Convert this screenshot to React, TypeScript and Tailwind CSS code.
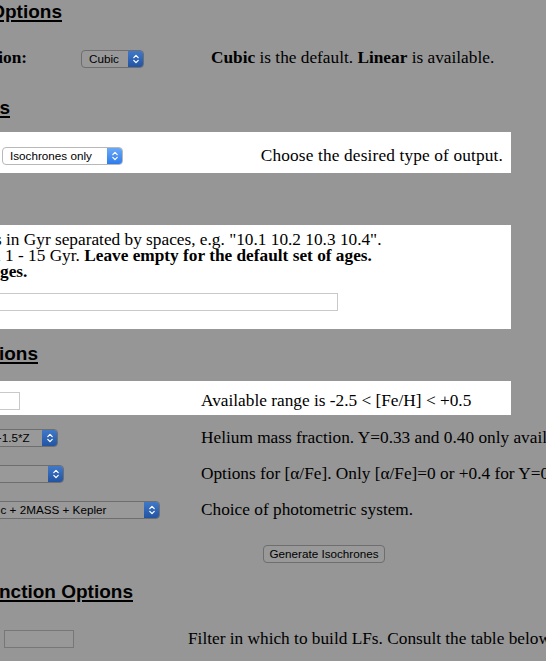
import React from "react";

// the crop cuts the page on its left; Cut keeps a fixed right edge and lets the rest spill out left
function Cut({ className, children }: { className: string; children: React.ReactNode }) {
  return (
    <div className={`flex shrink-0 justify-end whitespace-nowrap ${className}`}>{children}</div>
  );
}

function Heading({ edge, children }: { edge: string; children: React.ReactNode }) {
  return (
    <Cut className={edge}>
      <h2 className="font-['Liberation_Sans',Arial,sans-serif] text-[19px] font-bold leading-[22px] text-black underline decoration-[1.5px] underline-offset-[2px]">
        {children}
      </h2>
    </Cut>
  );
}

function Arrows() {
  return (
    <svg width="8" height="12" viewBox="0 0 8 12" fill="none" stroke="white" strokeWidth="1.3" strokeLinecap="round" strokeLinejoin="round">
      <path d="M1.8 4.6 L4 2.4 L6.2 4.6" />
      <path d="M1.8 7.4 L4 9.6 L6.2 7.4" />
    </svg>
  );
}

function Select({ label, className, dim }: { label: string; className: string; dim?: boolean }) {
  return (
    <div
      className={`flex h-[18px] shrink-0 items-stretch overflow-hidden rounded-[4px] border ${
        dim ? "border-[#6e6e6e] bg-[#999999]" : "border-[#b8b8b8] bg-white"
      } ${className}`}
    >
      <span className="flex-1 whitespace-nowrap pl-[7px] font-['Liberation_Sans',Arial,sans-serif] text-[11.7px] leading-[16px] text-black">
        {label}
      </span>
      <span
        className={`flex w-[15px] items-center justify-center ${
          dim ? "bg-linear-to-b from-[#4079c8] to-[#2254a3]" : "bg-linear-to-b from-[#6aa9f7] to-[#2e7bec]"
        }`}
      >
        <Arrows />
      </span>
    </div>
  );
}

function Input({ className, dim }: { className: string; dim?: boolean }) {
  return (
    <div
      className={`h-[18px] shrink-0 border ${
        dim ? "border-[#777777] bg-[#989898]" : "border-[#c9c9c9] bg-white"
      } ${className}`}
    />
  );
}

export default function App() {
  return (
    <div className="h-[661px] w-[546px] overflow-hidden bg-[#969696] font-['Liberation_Serif','Times_New_Roman',serif] text-[17.3px] text-black">
      {/* Interpolation */}
      <div className="pt-px">
        <Heading edge="w-[62px]">Interpolation Options</Heading>
      </div>

      <div className="mt-[22px] flex h-[28px] items-center whitespace-nowrap">
        <Cut className="w-[27px] mb-[3px]">
          <span className="font-bold">Interpolation:</span>
        </Cut>
        <Select label="Cubic" className="ml-[54px] w-[63px]" dim />
        <span className="ml-[67px] mb-[3px]">
          <b>Cubic</b> is the default. <b>Linear</b> is available.
        </span>
      </div>

      {/* Output */}
      <div className="mt-[24px]">
        <Heading edge="w-[10px]">Output Types</Heading>
      </div>

      <div className="mt-[13px] flex h-[41px] w-[511px] items-center bg-white pt-[6px] whitespace-nowrap">
        <Select label="Isochrones only" className="ml-[2px] w-[121px]" />
        <span className="ml-auto pr-[8px] tracking-[0.15px]">Choose the desired type of output.</span>
      </div>

      <div className="mt-[52px] w-[511px] bg-white pt-[7px] pb-[18px] leading-[16px] whitespace-nowrap">
        <div className="flex">
          <Cut className="w-[6px]">Enter ages&nbsp;</Cut>
          <span>in Gyr separated by spaces, e.g. "10.1 10.2 10.3 10.4".</span>
        </div>
        <div className="flex">
          <Cut className="w-[5px]">Ages must be within&nbsp;</Cut>
          <span>
            1 - 15 Gyr. <b>Leave empty for the default set of ages.</b>
          </span>
        </div>
        <div className="flex">
          <Cut className="w-[0px]">
            <b>Maximum of 20 a</b>
          </Cut>
          <b>ges.</b>
        </div>
        <div className="mt-[13px] flex">
          <Cut className="w-[338px]">
            <Input className="w-[420px]" />
          </Cut>
        </div>
      </div>

      {/* Composition */}
      <div className="mt-[14px]">
        <Heading edge="w-[38px]">Composition Options</Heading>
      </div>

      <div className="mt-[16px] flex h-[34px] w-[511px] items-center bg-white pt-[5px] whitespace-nowrap">
        <Cut className="w-[20px]">
          <Input className="w-[60px]" />
        </Cut>
        <span className="ml-[181px]">Available range is -2.5 &lt; [Fe/H] &lt; +0.5</span>
      </div>

      <div className="mt-[5px] flex h-[36px] items-center whitespace-nowrap">
        <Cut className="w-[58px]">
          <Select label="Y=0.245+1.5*Z" className="w-[115px]" dim />
        </Cut>
        <span className="ml-[143px]">Helium mass fraction. Y=0.33 and 0.40 only available for [Fe/H] ≤ 0.</span>
      </div>

      <div className="flex h-[36px] items-center whitespace-nowrap">
        <Cut className="w-[64px]">
          <Select label="[α/Fe]=0.0" className="w-[170px]" dim />
        </Cut>
        <span className="ml-[137px]">Options for [α/Fe]. Only [α/Fe]=0 or +0.4 for Y=0.33, 0.40.</span>
      </div>

      <div className="flex h-[36px] items-center whitespace-nowrap">
        <Cut className="w-[160px]">
          <Select label="UBV(RI)c + 2MASS + Kepler" className="w-[211px]" dim />
        </Cut>
        <span className="ml-[41px]">Choice of photometric system.</span>
      </div>

      <div className="mt-[17px] flex">
        <button className="ml-[263px] h-[18px] w-[122px] rounded-[4px] border border-[#6e6e6e] bg-[#999999] font-['Liberation_Sans',Arial,sans-serif] text-[11.7px] leading-[16px] text-black">
          Generate Isochrones
        </button>
      </div>

      {/* Luminosity function */}
      <div className="mt-[18px]">
        <Heading edge="w-[133px]">Luminosity Function Options</Heading>
      </div>

      <div className="mt-[18px] flex h-[36px] items-center whitespace-nowrap">
        <Input className="ml-[4px] w-[70px]" dim />
        <span className="ml-[114px]">Filter in which to build LFs. Consult the table below for the list.</span>
      </div>
    </div>
  );
}
